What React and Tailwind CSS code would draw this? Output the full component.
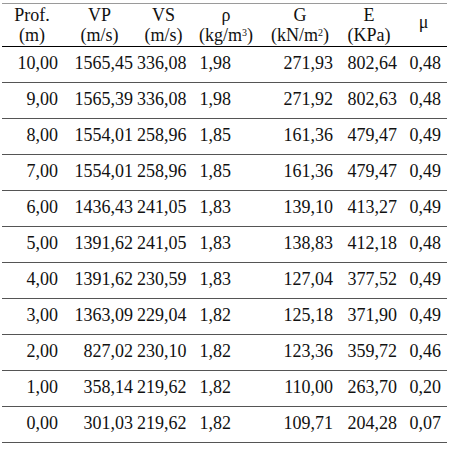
import React from "react";

const rows = [
  ["10,00", "1565,45", "336,08", "1,98", "271,93", "802,64", "0,48"],
  ["9,00", "1565,39", "336,08", "1,98", "271,92", "802,63", "0,48"],
  ["8,00", "1554,01", "258,96", "1,85", "161,36", "479,47", "0,49"],
  ["7,00", "1554,01", "258,96", "1,85", "161,36", "479,47", "0,49"],
  ["6,00", "1436,43", "241,05", "1,83", "139,10", "413,27", "0,49"],
  ["5,00", "1391,62", "241,05", "1,83", "138,83", "412,18", "0,48"],
  ["4,00", "1391,62", "230,59", "1,83", "127,04", "377,52", "0,49"],
  ["3,00", "1363,09", "229,04", "1,82", "125,18", "371,90", "0,49"],
  ["2,00", "827,02", "230,10", "1,82", "123,36", "359,72", "0,46"],
  ["1,00", "358,14", "219,62", "1,82", "110,00", "263,70", "0,20"],
  ["0,00", "301,03", "219,62", "1,82", "109,71", "204,28", "0,07"],
];

const cols = [
  "w-[60px] pr-[4px]",
  "w-[75px] pr-[4px]",
  "w-[53px] pr-[4px]",
  "w-[72px] pr-[31px]",
  "w-[76px] pr-[5px]",
  "w-[62px] pr-[3px]",
  "w-[47px] pr-[6px]",
];

export default function App() {
  return (
    <div className="w-[464px] h-[449px] bg-white pt-[3px] pl-[2px] font-['Liberation_Serif','Times_New_Roman',serif]">
      <table className="border-collapse table-fixed w-[445px] text-[18px] leading-[20px] text-[#111]">
        <thead>
          <tr className="h-[43px] border-t border-t-[#9a9a9a] border-b border-b-black">
            <th className="w-[60px] font-normal text-center align-middle">Prof.<br />(m)</th>
            <th className="w-[75px] font-normal text-center align-middle">VP<br />(m/s)</th>
            <th className="w-[53px] font-normal text-center align-middle">VS<br />(m/s)</th>
            <th className="w-[72px] font-normal text-center align-middle">ρ<br />(kg/m<sup className="text-[10px]">3</sup>)</th>
            <th className="w-[76px] font-normal text-center align-middle">G<br />(kN/m<sup className="text-[10px]">2</sup>)</th>
            <th className="w-[62px] font-normal text-center align-middle">E<br />(KPa)</th>
            <th className="w-[47px] font-normal text-center align-middle pb-[6px]">μ</th>
          </tr>
        </thead>
        <tbody>
          {rows.map((r, i) => (
            <tr key={i} className="h-[36px] border-b border-b-[#555]">
              {r.map((c, j) => (
                <td key={j} className={`${cols[j]} text-right align-top pt-[6px] whitespace-nowrap`}>{c}</td>
              ))}
            </tr>
          ))}
        </tbody>
      </table>
    </div>
  );
}
